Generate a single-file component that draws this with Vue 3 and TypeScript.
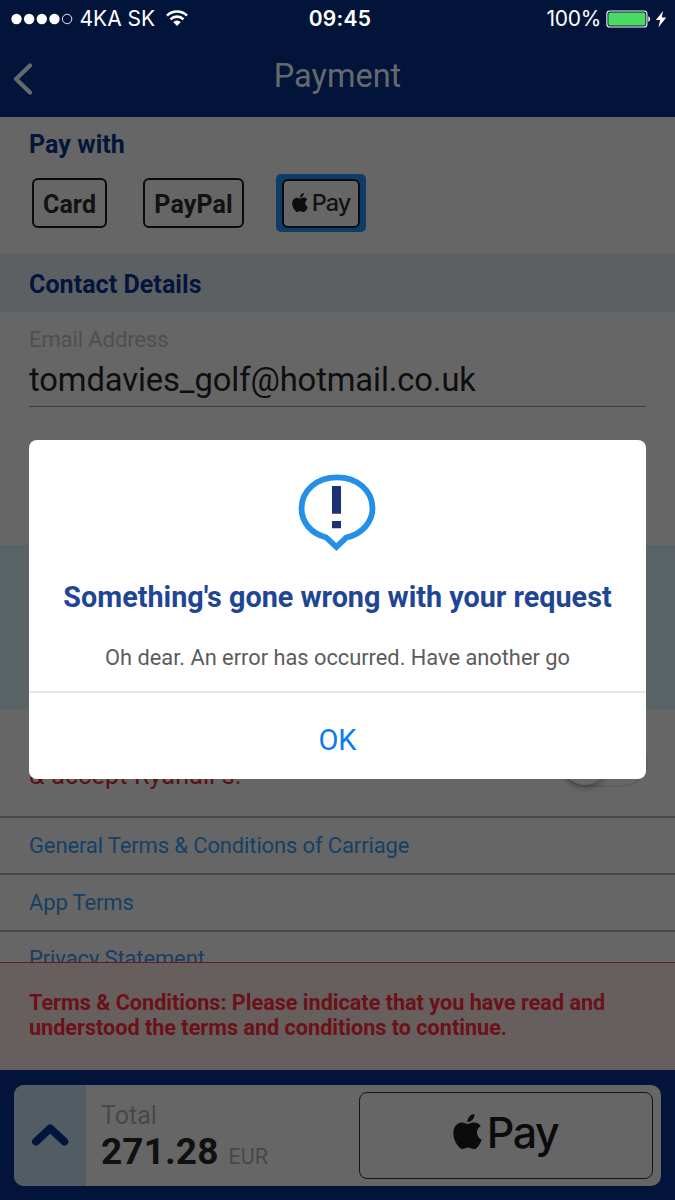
<script setup lang="ts">
const applePath =
  'M12.152 6.896c-.948 0-2.415-1.078-3.96-1.04-2.04.027-3.91 1.183-4.961 3.014-2.117 3.675-.546 9.103 1.519 12.09 1.013 1.454 2.208 3.09 3.792 3.039 1.52-.065 2.09-.987 3.935-.987 1.831 0 2.35.987 3.96.948 1.637-.026 2.676-1.48 3.676-2.948 1.156-1.688 1.636-3.325 1.662-3.415-.039-.013-3.182-1.221-3.22-4.857-.026-3.04 2.48-4.494 2.597-4.559-1.429-2.09-3.623-2.324-4.39-2.376-2-.156-3.675 1.09-4.61 1.09zM15.53 3.83c.843-1.012 1.4-2.427 1.245-3.83-1.207.052-2.662.805-3.532 1.818-.78.896-1.454 2.338-1.273 3.714 1.338.104 2.715-.688 3.559-1.701'
const signal: boolean[] = [true, true, true, true, false]
const links: string[] = ['General Terms & Conditions of Carriage', 'App Terms', 'Privacy Statement']
</script>

<template>
  <div class="screen">
    <header class="header">
      <div class="status">
        <div class="carrier">
          <svg class="dots" width="64" height="12" viewBox="0 0 64 12">
            <circle
              v-for="(on, i) in signal"
              :key="i"
              :cx="5.5 + i * 12.65"
              cy="6"
              :r="on ? 5.2 : 4.7"
              :fill="on ? '#fff' : 'none'"
              stroke="#fff"
              :stroke-width="on ? 0 : 0.9"
            />
          </svg>
          <span class="carrier-name">4KA SK</span>
          <svg class="wifi" width="22" height="17" viewBox="0 0 22 17">
            <g fill="none" stroke="#fff" stroke-width="2.6">
              <path d="M1 5.6A14.2 14.2 0 0 1 21 5.6" />
              <path d="M4.5 9.3A9.2 9.2 0 0 1 17.5 9.3" />
            </g>
            <path d="M7.2 12.1a5.4 5.4 0 0 1 7.6 0L11 16z" fill="#fff" />
          </svg>
        </div>
        <div class="clock">09:45</div>
        <div class="power">
          <span class="percent">100%</span>
          <svg width="61" height="18" viewBox="0 0 61 18">
            <rect x=".9" y="1" width="40" height="16" rx="2.8" fill="none" stroke="#fff" stroke-width="1.1" />
            <rect x="2.4" y="2.5" width="37" height="13" rx="1.5" fill="#4cd964" />
            <path d="M42.300 6.200c2.400.6 2.400 5 0 5.600z" fill="#fff" />
            <path d="M57 .9 49.900 10h4.300l-1.700 7.200 7.700-9.800h-4.400z" fill="#fff" />
          </svg>
        </div>
      </div>
      <div class="nav">
        <svg class="back" width="22" height="34" viewBox="0 0 22 34">
          <path d="M18 3.5 4 17 18 30.5" fill="none" stroke="#66696c" stroke-width="4.3" stroke-linecap="round" stroke-linejoin="round" />
        </svg>
        <h1 class="title">Payment</h1>
      </div>
    </header>

    <section class="pay">
      <h2 class="heading pay-with">Pay with</h2>
      <div class="methods">
        <button class="method card">Card</button>
        <button class="method paypal">PayPal</button>
        <button class="selected">
          <span class="method apple">
            <svg width="16" height="19" viewBox="2 0 20 24" preserveAspectRatio="none"><path :d="applePath" fill="#0e0e0e" /></svg>
            <span class="apple-label">Pay</span>
          </span>
        </button>
      </div>
    </section>

    <section class="contact-head"><h2 class="heading contact">Contact Details</h2></section>
    <section class="contact-form">
      <div class="field-label">Email Address</div>
      <div class="field-value">tomdavies_golf@hotmail.co.uk</div>
    </section>
    <section class="band"></section>
    <section class="consent">
      <p class="accept">&amp; accept Ryanair's:</p>
      <div class="toggle"><i class="knob"></i></div>
    </section>
    <nav class="links">
      <a v-for="label in links" :key="label" class="link">{{ label }}</a>
    </nav>

    <section class="error">
      <p>Terms &amp; Conditions: Please indicate that you have read and</p>
      <p>understood the terms and conditions to continue.</p>
    </section>

    <footer class="footer">
      <div class="total-card">
        <div class="expand">
          <svg width="40" height="26" viewBox="0 0 40 26">
            <path d="M5.900 19.700 20.200 6.300 34.500 19.700" fill="none" stroke="#03153c" stroke-width="7.8" stroke-linecap="round" stroke-linejoin="round" />
          </svg>
        </div>
        <div class="total">
          <div class="total-label">Total</div>
          <div class="amount"><b>271.28</b><span>EUR</span></div>
        </div>
        <button class="apple-pay">
          <svg width="29" height="35" viewBox="2 0 20 24" preserveAspectRatio="none"><path :d="applePath" fill="#0c0b0c" /></svg>
          <span>Pay</span>
        </button>
      </div>
    </footer>

    <div class="dialog">
      <svg class="alert" width="80" height="80" viewBox="0 0 80 80">
        <path
          d="M40 5.400C20 5.400 4.500 18.500 4.500 36.300c0 14.300 9.800 25.200 24.800 29.200L39.400 75 49.500 65.500C64.500 62 75.500 50.600 75.500 36.300 75.500 18.500 60 5.400 40 5.400z"
          fill="none"
          stroke="#238fe6"
          stroke-width="5.8"
        />
        <path d="M35 14h9v27.800h-9zM35 49h9v7.200h-9z" fill="#1c3272" />
      </svg>
      <h2 class="dialog-title">Something's gone wrong with your request</h2>
      <p class="dialog-text">Oh dear. An error has occurred. Have another go</p>
      <button class="ok">OK</button>
    </div>
  </div>
</template>

<style>
body {
  margin: 0;
}
</style>

<style scoped>
.screen {
  position: relative;
  width: 675px;
  height: 1200px;
  overflow: hidden;
  display: flex;
  flex-direction: column;
  background: #666;
  font-family: Roboto, 'Liberation Sans', sans-serif;
  white-space: nowrap;
}
.screen > * {
  flex-shrink: 0;
  box-sizing: border-box;
}
h1, h2, p {
  margin: 0;
}
button {
  padding: 0;
  margin: 0;
  border: 0;
  background: none;
  font-family: inherit;
  box-sizing: border-box;
}
svg {
  display: block;
  flex: none;
}
.header {
  height: 117px;
  background: #02143a;
}
.status {
  height: 37px;
  display: grid;
  grid-template-columns: 1fr auto 1fr;
  align-items: center;
  padding: 0 8px 0 11px;
  color: #fff;
  font-family: Inter, Roboto, sans-serif;
  font-size: 21px;
}
.carrier {
  display: flex;
  align-items: center;
}
.carrier-name {
  margin-left: 4.5px;
  width: 76.5px;
}
.wifi {
  margin-left: 10px;
}
.clock {
  font-weight: 600;
  letter-spacing: 0.3px;
  padding-left: 2px;
}
.power {
  display: flex;
  align-items: center;
  justify-content: flex-end;
}
.percent {
  margin-right: 5px;
  letter-spacing: -0.3px;
}
.nav {
  height: 80px;
  display: grid;
  grid-template-columns: 60px 1fr 60px;
  align-items: center;
}
.back {
  margin: 3px 0 0 12px;
}
.title {
  font-size: 32.5px;
  font-weight: 400;
  line-height: 78px;
  height: 80px;
  text-align: center;
  color: #66696c;
}
.pay {
  height: 136px;
  padding-left: 29px;
}
.heading {
  font-size: 25px;
  font-weight: 700;
  color: #03153c;
  letter-spacing: 0.06px;
}
.pay-with {
  line-height: 56px;
  height: 57px;
}
.methods {
  display: flex;
  align-items: center;
  height: 58px;
  padding-left: 3px;
}
.method {
  height: 50px;
  border: 2px solid #0b0b0b;
  border-radius: 6px;
  box-sizing: border-box;
  font-size: 25px;
  font-weight: 700;
  color: #121212;
  letter-spacing: 0.1px;
}
.card {
  width: 75px;
  padding-top: 2px;
}
.paypal {
  width: 101px;
  margin: 0 32px 0 36px;
  padding-top: 2px;
}
.selected {
  width: 90px;
  height: 58px;
  border-radius: 5px;
  background: #0d3d66;
  display: flex;
  align-items: center;
  justify-content: center;
}
.apple {
  width: 78px;
  height: 49px;
  background: #666;
  display: flex;
  align-items: center;
  justify-content: center;
  gap: 4px;
}
.apple svg {
  margin-top: -2px;
}
.apple-label {
  font: 500 23.5px/28px Inter, sans-serif;
  letter-spacing: -1px;
}
.contact-head {
  height: 59px;
  padding-left: 29px;
  background: #5d6063;
}
.contact {
  line-height: 63px;
}
.contact-form {
  height: 233px;
  padding: 12px 29px 0;
}
.field-label {
  font-size: 22px;
  line-height: 31px;
  height: 29px;
  letter-spacing: -0.1px;
  color: #4f4f4f;
}
.field-value {
  height: 54px;
  box-sizing: border-box;
  border-bottom: 1px solid #3e3e3e;
  font-size: 32.7px;
  line-height: 54px;
  letter-spacing: -0.09px;
  color: #0e0e0e;
}
.band {
  height: 164px;
  background: #596265;
}
.consent {
  height: 109px;
  padding: 50px 27px 0 29px;
  display: flex;
  justify-content: space-between;
  border-bottom: 2px solid #484848;
}
.accept {
  font-size: 25px;
  line-height: 33px;
  letter-spacing: 0.2px;
  color: #5c0f16;
}
.toggle {
  width: 88px;
  height: 50px;
  margin-top: -22px;
  border-radius: 25px;
  border: 2px solid #5e5e5e;
  box-sizing: border-box;
}
.knob {
  display: block;
  width: 46px;
  height: 46px;
  border-radius: 50%;
  background: #666;
  box-shadow: 0 3px 6px rgba(0, 0, 0, 0.3);
}
.links {
  height: 144px;
  overflow: hidden;
}
.link {
  display: block;
  height: 57px;
  box-sizing: border-box;
  padding-left: 29px;
  border-bottom: 2px solid #484848;
  font-size: 22px;
  line-height: 55px;
  letter-spacing: -0.13px;
  color: #163f64;
}
.link:last-child {
  line-height: 53px;
}
.error {
  height: 108px;
  padding: 27px 29px 0;
  border-top: 1px solid #6b171d;
  background: #675e5e;
  color: #6b1118;
  font-size: 21.6px;
  font-weight: 700;
  line-height: 25px;
}
.footer {
  height: 130px;
  padding: 15px 14px 0;
  background: #02143a;
}
.total-card {
  height: 101px;
  border-radius: 10px;
  overflow: hidden;
  background: #666;
  display: flex;
}
.expand {
  width: 72px;
  background: #525c63;
  display: flex;
  align-items: center;
  justify-content: center;
}
.expand svg {
  margin-top: -2px;
}
.total {
  width: 273px;
  padding-left: 15px;
  box-sizing: border-box;
}
.total-label {
  margin-top: 15px;
  height: 32px;
  font-size: 25px;
  line-height: 31px;
  color: #47484b;
}
.amount {
  display: flex;
  align-items: baseline;
  line-height: 40px;
}
.amount b {
  font-size: 37px;
  color: #101010;
  letter-spacing: 0.1px;
}
.amount span {
  margin-left: 10px;
  font-size: 21.5px;
  color: #47484b;
}
.apple-pay {
  width: 294px;
  height: 87px;
  margin-top: 7px;
  border: 1px solid #151515;
  border-radius: 8px;
  display: flex;
  align-items: center;
  justify-content: center;
  gap: 5px;
  color: #0c0b0c;
}
.apple-pay span {
  margin-top: -7px;
  font: 500 43px/50px Inter, sans-serif;
  letter-spacing: -1.5px;
}
.apple-pay svg {
  margin: -8px 0 0 -1px;
}
.dialog {
  position: absolute;
  left: 29px;
  top: 440px;
  width: 617px;
  height: 339px;
  border-radius: 8px;
  background: #fff;
  text-align: center;
}
.alert {
  margin: 32px 0 0 268px;
}
.dialog-title {
  margin-top: 20px;
  font-size: 28.75px;
  font-weight: 700;
  line-height: 51px;
  color: #1f4694;
}
.dialog-text {
  height: 70px;
  padding-top: 20px;
  box-sizing: border-box;
  border-bottom: 2px solid #e8e8e8;
  font-size: 21.8px;
  line-height: 30px;
  color: #5c5c5c;
}
.ok {
  width: 100%;
  height: 86px;
  padding-top: 7px;
  font-size: 29px;
  color: #0a7bf0;
}
</style>
